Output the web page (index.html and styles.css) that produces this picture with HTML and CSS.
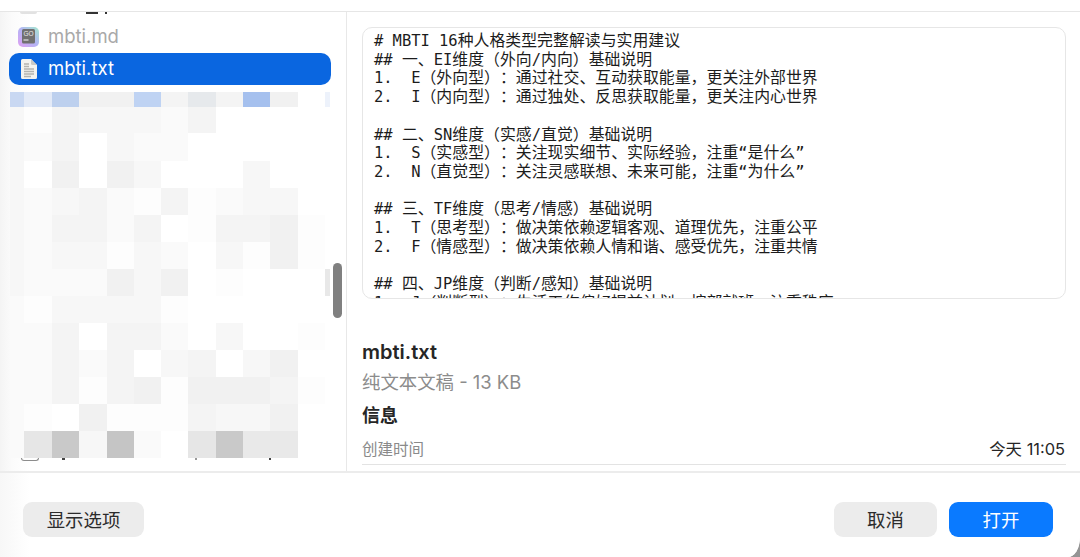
FILE: index.html
```html
<!DOCTYPE html>
<html lang="zh-CN">
<head>
<meta charset="utf-8">
<title>打开文件</title>
<link rel="stylesheet" href="styles.css">
</head>
<body>
<div class="window">
  <div class="topbar"></div>
  <div class="main">
    <aside class="sidebar">
      <div class="stub-top">
        <span class="mark mark-icon"></span>
        <span class="mark mark-a"></span>
        <span class="mark mark-b"></span>
      </div>
      <div class="file-row muted">
        <svg class="file-icon md-icon" viewBox="0 0 21 20" aria-hidden="true">
          <defs>
            <linearGradient id="goedge" x1="0" y1="1" x2="1" y2="0">
              <stop offset="0" stop-color="#dfa0f2"/>
              <stop offset="0.5" stop-color="#b4b4f5"/>
              <stop offset="1" stop-color="#a4e8cd"/>
            </linearGradient>
          </defs>
          <rect width="21" height="20" rx="5" fill="url(#goedge)"/>
          <rect x="4" y="2" width="13" height="14.500" rx="1.500" fill="#707070"/>
          <text x="10.500" y="8.800" class="go-text" text-anchor="middle">GO</text>
          <rect x="5.500" y="12.400" width="5" height="1.200" fill="#e0e0e0"/>
        </svg>
        <span>mbti.md</span>
      </div>
      <div class="file-row selected">
        <svg class="file-icon doc-icon" viewBox="0 0 16 20" aria-hidden="true">
          <path d="M1.5 0H10l6 6v12.500a1.500 1.500 0 0 1-1.500 1.500h-13A1.500 1.500 0 0 1 0 18.500v-17A1.500 1.500 0 0 1 1.500 0z" fill="#f4f3ef"/>
          <path d="M10 0l6 6h-4.500A1.500 1.500 0 0 1 10 4.500z" fill="#c9c9c5"/>
          <path d="M3 5h5M3 7.500h5M3 10h10M3 12.500h10M3 15h10M3 17.500h7" stroke="#b4b4b0" stroke-width="1.300"/>
        </svg>
        <span>mbti.txt</span>
      </div>
      <div class="mosaic" aria-hidden="true">
        <i class="b1"></i><i class="b2"></i><i class="b3"></i><i class="f1"></i><i class="f1"></i><i class="b4"></i><i class="f4"></i><i class="b5"></i><i class="f4"></i><i class="b6"></i><i class="f1"></i><i></i><i class="b7"></i>
        <i class="f7"></i><i class="fd"></i><i class="f4"></i><i class="f7"></i><i class="f7"></i><i class="f7"></i><i class="fa"></i><i class="f4"></i><i></i><i></i><i></i><i></i><i></i>
        <i class="f7"></i><i class="fa"></i><i class="f4"></i><i></i><i class="f7"></i><i class="fa"></i><i class="fa"></i><i></i><i></i><i></i><i></i><i></i><i></i>
        <i class="f7"></i><i></i><i class="f1"></i><i></i><i class="f1"></i><i class="f7"></i><i></i><i></i><i></i><i class="f7"></i><i></i><i></i><i></i>
        <i class="f7"></i><i class="fa"></i><i class="f7"></i><i class="f4"></i><i class="fa"></i><i class="fd"></i><i class="f4"></i><i class="fd"></i><i class="fa"></i><i class="f7"></i><i class="f7"></i><i></i><i></i>
        <i class="f7"></i><i class="fa"></i><i class="f4"></i><i class="f4"></i><i class="fa"></i><i class="f4"></i><i></i><i class="fd"></i><i class="f4"></i><i class="f4"></i><i class="f1"></i><i class="fd"></i><i></i>
        <i class="f7"></i><i class="fa"></i><i class="f7"></i><i class="f7"></i><i class="fd"></i><i class="f7"></i><i class="fa"></i><i></i><i class="f7"></i><i class="fd"></i><i class="f1"></i><i class="fd"></i><i></i>
        <i class="f7"></i><i class="fa"></i><i class="fa"></i><i class="fa"></i><i class="f1"></i><i class="f7"></i><i class="f1"></i><i></i><i class="fd"></i><i></i><i></i><i></i><i class="e7"></i>
        <i class="fa"></i><i class="fd"></i><i class="f7"></i><i class="f7"></i><i class="f7"></i><i class="f7"></i><i class="fd"></i><i></i><i></i><i></i><i></i><i></i><i></i>
        <i class="fa"></i><i class="fa"></i><i class="f4"></i><i></i><i class="f4"></i><i class="f4"></i><i class="fa"></i><i></i><i class="f7"></i><i></i><i></i><i class="fd"></i><i></i>
        <i class="fa"></i><i class="fa"></i><i class="f4"></i><i class="fa"></i><i class="f4"></i><i></i><i class="f7"></i><i class="f4"></i><i></i><i class="f7"></i><i class="f1"></i><i></i><i></i>
        <i class="fa"></i><i class="fa"></i><i class="f4"></i><i class="fd"></i><i class="f4"></i><i class="f1"></i><i class="fd"></i><i class="f1"></i><i class="f1"></i><i class="f1"></i><i class="f4"></i><i class="fd"></i><i></i>
        <i class="fa"></i><i class="fd"></i><i></i><i class="f1"></i><i class="fd"></i><i class="fd"></i><i class="fd"></i><i class="f4"></i><i class="f7"></i><i class="f7"></i><i class="f1"></i><i></i><i></i>
        <i class="fa"></i><i class="e7"></i><i class="c7"></i><i class="f7"></i><i class="c5"></i><i class="fa"></i><i></i><i class="e7"></i><i class="c7"></i><i class="e9"></i><i class="e9"></i><i></i><i></i>
      </div>
      <div class="stub-bottom">
        <span class="box-peek"></span>
        <span class="dot dot-a"></span>
        <span class="dot dot-b"></span>
        <span class="dot dot-c"></span>
      </div>
      <div class="scroll-track"></div>
      <div class="scroll-thumb"></div>
    </aside>
    <section class="info">
      <div class="preview">
<pre class="preview-text"><span class="m"># MBTI 16</span>种人格类型完整解读与实用建议
<span class="m">## </span>一、<span class="m">EI</span>维度（外向<span class="m">/</span>内向）基础说明
<span class="m">1.  E</span>（外向型）：通过社交、互动获取能量，更关注外部世界
<span class="m">2.  I</span>（内向型）：通过独处、反思获取能量，更关注内心世界

<span class="m">## </span>二、<span class="m">SN</span>维度（实感<span class="m">/</span>直觉）基础说明
<span class="m">1.  S</span>（实感型）：关注现实细节、实际经验，注重<span class="m">“</span>是什么<span class="m">”</span>
<span class="m">2.  N</span>（直觉型）：关注灵感联想、未来可能，注重<span class="m">“</span>为什么<span class="m">”</span>

<span class="m">## </span>三、<span class="m">TF</span>维度（思考<span class="m">/</span>情感）基础说明
<span class="m">1.  T</span>（思考型）：做决策依赖逻辑客观、道理优先，注重公平
<span class="m">2.  F</span>（情感型）：做决策依赖人情和谐、感受优先，注重共情

<span class="m">## </span>四、<span class="m">JP</span>维度（判断<span class="m">/</span>感知）基础说明
<span class="m">1.  J</span>（判断型）：生活工作偏好提前计划、按部就班，注重秩序</pre>
      </div>
      <h1 class="name">mbti.txt</h1>
      <p class="kind">纯文本文稿 - 13 KB</p>
      <h2 class="section">信息</h2>
      <div class="meta">
        <span class="meta-label">创建时间</span>
        <span class="meta-value">今天 11:05</span>
      </div>
    </section>
  </div>
  <footer class="footer">
    <button class="btn btn-options" type="button">显示选项</button>
    <div class="actions">
      <button class="btn btn-cancel" type="button">取消</button>
      <button class="btn btn-primary" type="button">打开</button>
    </div>
  </footer>
</div>
</body>
</html>
```
FILE: styles.css
```css
* { box-sizing: border-box; }
html, body { margin: 0; height: 100%; }
body {
  background: #949494;
  overflow: hidden;
  font-family: Inter, "Noto Sans CJK SC", sans-serif;
  color: #262626;
}
.window {
  width: 1080px;
  height: 557px;
  background: #fff;
  border-bottom-right-radius: 12px 20px;
  display: flex;
  flex-direction: column;
  overflow: hidden;
}
.topbar { height: 12px; border-bottom: 1px solid #e6e6e6; flex: none; }
.main {
  height: 461px;
  flex: none;
  display: flex;
  border-bottom: 2px solid #ececec;
}
.sidebar {
  width: 347px;
  flex: none;
  position: relative;
  border-right: 1px solid #e8e8e8;
  background: linear-gradient(90deg, #f4f4f4 0, #fbfbfb 12px, #fff 30px);
  overflow: hidden;
}
.stub-top { height: 9px; position: relative; }
.mark { position: absolute; top: 0; height: 3px; }
.mark-icon { left: 20px; width: 17px; background: #e2e2e2; height: 2px; border-radius: 0 0 3px 3px; }
.mark-a { left: 86px; width: 12px; height: 2px; background: #333; }
.mark-b { left: 105px; width: 2px; height: 2px; background: #333; }

.file-row {
  height: 32px;
  margin: 0 15px 0 9px;
  padding: 0 0 2px 9px;
  display: flex;
  align-items: center;
  gap: 9px;
  font-size: 18.500px;
  border-radius: 10px;
}
.muted { color: #a9a9a9; }
.selected { background: #0a66e0; color: #fff; padding-left: 12px; gap: 11px; }
.file-icon { flex: none; }
.md-icon { width: 21px; height: 20px; margin-top: 2px; }
.doc-icon { width: 16px; height: 20px; margin-top: 2px; }
.go-text { font-family: "Liberation Sans", sans-serif; font-size: 6.500px; fill: #e8e8e8; }

.mosaic {
  margin: 7px 0 0 10px;
  display: grid;
  grid-template-columns: 14px 28px 27px 28px 27px 27px 27px 28px 27px 27px 28px 27px 5px;
  grid-template-rows: 15px 26px 28px repeat(11, 27px);
}
.mosaic i { display: block; background: #fff; }
.mosaic .fd { background: #fdfdfd; }
.mosaic .fa { background: #fafafa; }
.mosaic .f7 { background: #f7f7f7; }
.mosaic .f4 { background: #f4f4f4; }
.mosaic .f1 { background: #f1f1f1; }
.mosaic .e9 { background: #e9e9e9; }
.mosaic .e7 { background: #e6e6e6; }
.mosaic .c7 { background: #c9c9c9; }
.mosaic .c5 { background: #c5c5c5; }
.mosaic .b1 { background: #c9d8f2; }
.mosaic .b2 { background: #e3eaf7; }
.mosaic .b3 { background: #bdd0ee; }
.mosaic .b4 { background: #bfd3f3; }
.mosaic .b5 { background: #e6e9ec; }
.mosaic .b6 { background: #a5c0ee; }
.mosaic .b7 { background: #edf2fb; }

.stub-bottom { height: 4px; position: relative; }
.box-peek {
  position: absolute;
  left: 21px;
  top: 0;
  width: 18px;
  height: 3px;
  border: 1px solid #8c8c8c;
  border-top: 0;
  border-radius: 0 0 3px 3px;
}
.dot { position: absolute; top: 0; width: 2px; height: 2px; background: #444; }
.dot-a { left: 62px; width: 3px; }
.dot-b { left: 195px; background: #999; }
.dot-c { left: 269px; }

.scroll-track {
  position: absolute;
  left: 325px;
  top: 257px;
  width: 5px;
  height: 27px;
  background: #e8e8e8;
}
.scroll-thumb {
  position: absolute;
  left: 333px;
  top: 251px;
  width: 9px;
  height: 55px;
  background: #808080;
  border-radius: 5px;
}

.info {
  flex: 1;
  min-width: 0;
  padding: 15px 14px 0 15px;
  display: flex;
  flex-direction: column;
}
.preview {
  height: 272px;
  flex: none;
  border: 1px solid #e6e6e6;
  border-radius: 10px;
  padding: 3px 0 0 11px;
  overflow: hidden;
}
.preview-text {
  margin: 0;
  font-family: "Noto Sans CJK SC", sans-serif;
  font-size: 15.900px;
  line-height: 18.700px;
  color: #1c1c1c;
  text-spacing-trim: space-all;
}
.m { font-family: "DejaVu Sans Mono", monospace; font-size: 15.450px; line-height: 0; }
.name {
  margin: 41px 0 0;
  font-size: 20px;
  line-height: 24px;
  font-weight: 600;
}
.kind {
  margin: 6px 0 0;
  font-size: 18.400px;
  line-height: 24px;
  color: #8c8c8c;
}
.section {
  margin: 10px 0 0;
  font-size: 18px;
  line-height: 24px;
  font-weight: 600;
}
.meta {
  margin-top: 11px;
  height: 26px;
  display: flex;
  justify-content: space-between;
  align-items: baseline;
  line-height: 20px;
  border-bottom: 1px solid #e3e3e3;
}
.meta-label { color: #8a8a8a; font-size: 15.500px; }
.meta-value { color: #262626; font-size: 16.400px; padding-right: 1px; }

.footer {
  flex: 1;
  display: flex;
  justify-content: space-between;
  align-items: flex-start;
  padding: 29px 27px 0 23px;
  background: linear-gradient(90deg, #f7f7f7 0, #fff 30px);
}
.actions { display: flex; gap: 12px; }
.btn {
  height: 35px;
  border: 0;
  border-radius: 9px;
  font-family: inherit;
  font-size: 18.400px;
  background: #ececec;
  color: #2b2b2b;
  padding: 0 0 2px;
}
.btn-options { width: 121px; }
.btn-cancel { width: 103px; }
.btn-primary { width: 104px; background: #0a7aff; color: #fff; }
```
